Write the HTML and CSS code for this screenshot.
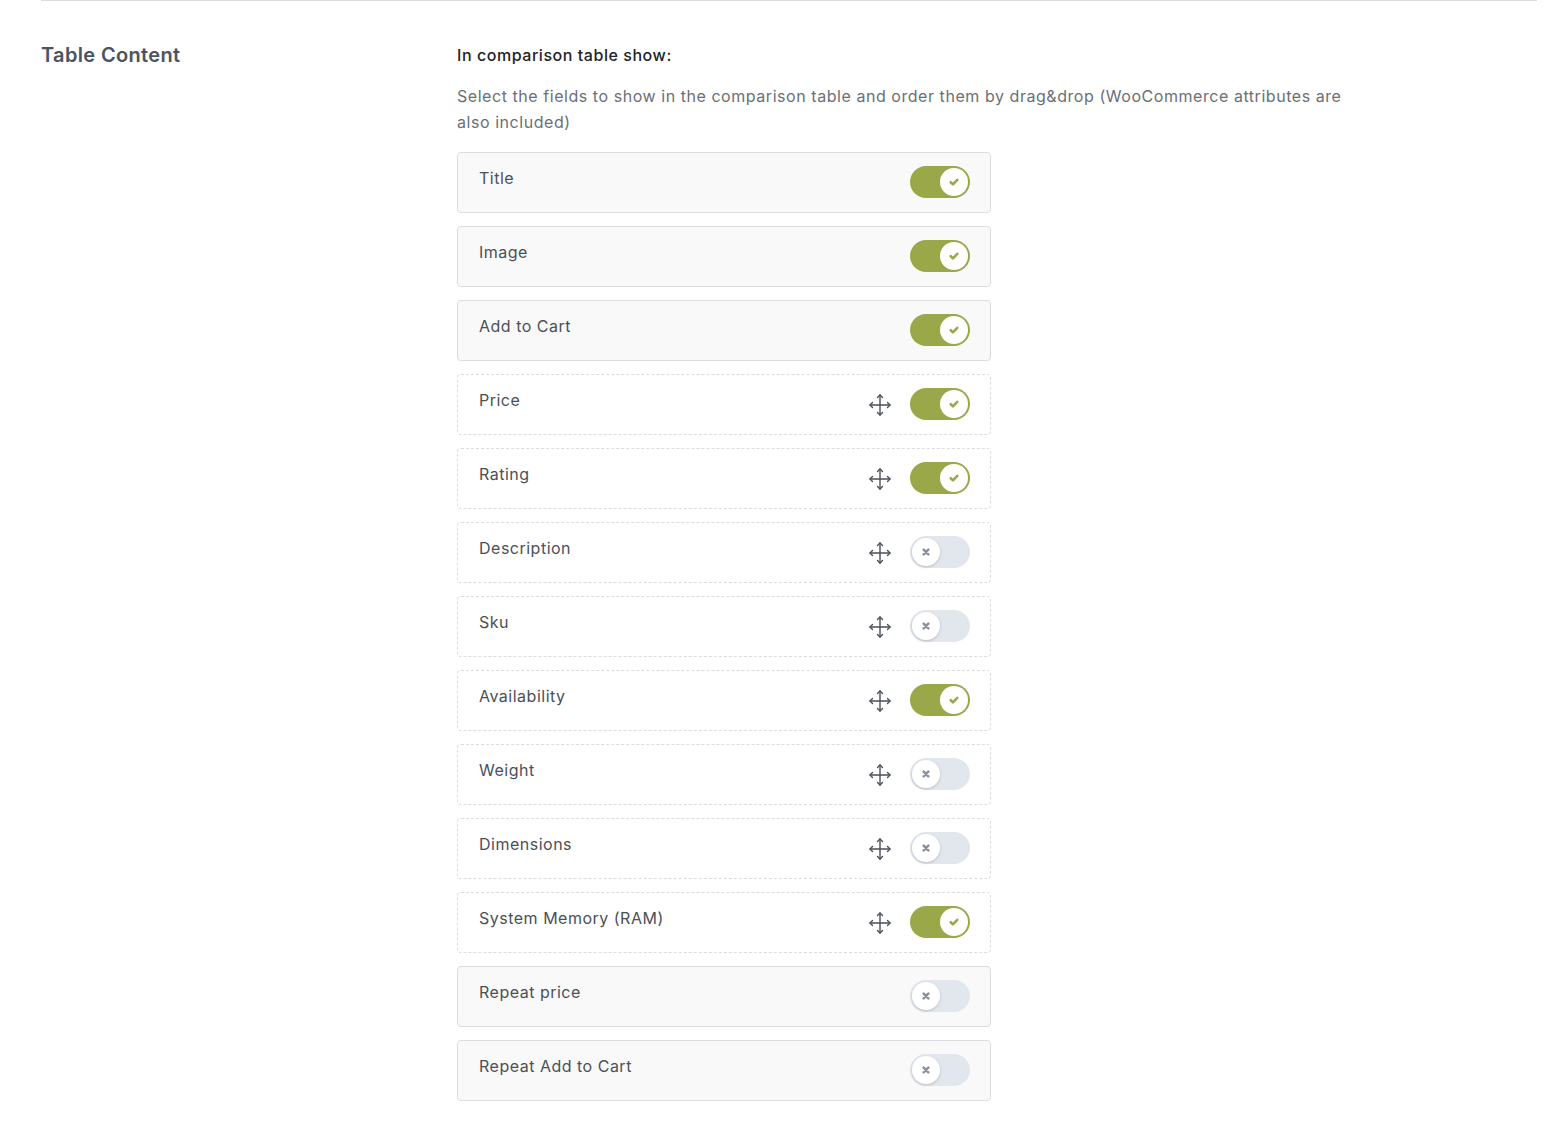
FILE: index.html
```html
<!DOCTYPE html>
<html lang="en">
<head>
    <meta charset="UTF-8">
    <title>Table Content</title>
    <link rel="stylesheet" href="styles.css">
</head>
<body>
    <div class="settings">
        <div class="setting-row">
            <h2 class="setting-title">Table Content</h2>
            <div class="setting-body">
                <div class="field-label">In comparison table show:</div>
                <p class="field-desc">Select the fields to show in the comparison table and order them by drag&amp;drop (WooCommerce attributes are also included)</p>

                <ul class="field-list">
                    <li class="field fixed"><span class="field-name">Title</span><span class="toggle on"></span></li>
                    <li class="field fixed"><span class="field-name">Image</span><span class="toggle on"></span></li>
                    <li class="field fixed"><span class="field-name">Add to Cart</span><span class="toggle on"></span></li>
                    <li class="field sortable"><span class="field-name">Price</span><span class="drag"></span><span class="toggle on"></span></li>
                    <li class="field sortable"><span class="field-name">Rating</span><span class="drag"></span><span class="toggle on"></span></li>
                    <li class="field sortable"><span class="field-name">Description</span><span class="drag"></span><span class="toggle"></span></li>
                    <li class="field sortable"><span class="field-name">Sku</span><span class="drag"></span><span class="toggle"></span></li>
                    <li class="field sortable"><span class="field-name">Availability</span><span class="drag"></span><span class="toggle on"></span></li>
                    <li class="field sortable"><span class="field-name">Weight</span><span class="drag"></span><span class="toggle"></span></li>
                    <li class="field sortable"><span class="field-name">Dimensions</span><span class="drag"></span><span class="toggle"></span></li>
                    <li class="field sortable"><span class="field-name">System Memory (RAM)</span><span class="drag"></span><span class="toggle on"></span></li>
                    <li class="field fixed"><span class="field-name">Repeat price</span><span class="toggle"></span></li>
                    <li class="field fixed"><span class="field-name">Repeat Add to Cart</span><span class="toggle"></span></li>
                </ul>
            </div>
        </div>
    </div>

    <script>
        // drop the same icons into every drag handle and toggle knob
        const dragIcon = '<svg width="24" height="24" viewBox="0 0 24 24" fill="none" stroke="#4b5058" stroke-width="1.4" stroke-linecap="round" stroke-linejoin="round">' +
            '<path d="M12 2v20M2 12h20"/>' +
            '<path d="M9.5 4.5L12 2l2.5 2.5M9.5 19.5L12 22l2.5-2.5M4.5 9.5L2 12l2.5 2.5M19.5 9.5L22 12l-2.5 2.5"/></svg>';
        const checkIcon = '<svg width="14" height="14" viewBox="0 0 12 12" fill="none" stroke="#9aa84a" stroke-width="2.2" stroke-linecap="round" stroke-linejoin="round"><path d="M3.2 6.2l1.9 1.9 3.7-4"/></svg>';
        const crossIcon = '<svg width="14" height="14" viewBox="0 0 12 12" fill="none" stroke="#8a909b" stroke-width="2.2" stroke-linecap="round"><path d="M4 4l4 4M8 4l-4 4"/></svg>';

        document.querySelectorAll('.drag').forEach(el => {
            el.innerHTML = dragIcon;
        });

        document.querySelectorAll('.toggle').forEach(el => {
            const on = el.classList.contains('on');
            el.innerHTML = '<span class="knob">' + (on ? checkIcon : crossIcon) + '</span>';
        });
    </script>
</body>
</html>
```

FILE: styles.css
```css
body {
    margin: 0;
    padding: 0;
    background: #fff;
    font-family: Inter, "Noto Sans", Arial, sans-serif;
    color: #50575e;
}

.settings {
    margin: 0 27px 0 41px;
    border-top: 1px solid #dcdcde;
}

.setting-row {
    display: flex;
    padding-top: 42px;
    padding-bottom: 40px;
}

.setting-title {
    width: 416px;
    flex-shrink: 0;
    margin: 0;
    font-size: 20px;
    line-height: 24px;
    font-weight: 600;
    letter-spacing: 0.35px;
    color: #4a5361;
}

.setting-body {
    flex: 1;
}

.field-label {
    font-size: 16px;
    line-height: 24px;
    font-weight: 500;
    letter-spacing: 0.55px;
    color: #1d2327;
}

.field-desc {
    max-width: 892px;
    margin: 16px 0 17px;
    font-size: 16px;
    line-height: 26px;
    letter-spacing: 0.55px;
    color: #6b6f75;
}

.field-list {
    list-style: none;
    margin: 0;
    padding: 0;
    width: 534px;
    display: flex;
    flex-direction: column;
    gap: 13px;
}

.field {
    display: flex;
    align-items: center;
    height: 61px;
    box-sizing: border-box;
    padding: 0 20px 0 21px;
    border-radius: 4px;
    font-size: 16px;
}

.field.fixed {
    background: #f9f9f9;
    border: 1px solid #dcdcde;
}

.field.sortable {
    background: #fff;
    border: 1px dashed #dcdcde;
}

.field-name {
    flex: 1;
    margin-top: -10px;
    line-height: 24px;
    color: #4b5058;
    letter-spacing: 0.5px;
}

.drag {
    display: flex;
    width: 24px;
    height: 24px;
    margin-right: 18px;
}

.toggle {
    position: relative;
    width: 60px;
    height: 32px;
    margin-top: -1px;
    border-radius: 16px;
    background: #e2e6ed;
    flex-shrink: 0;
}

.toggle.on {
    background: #9aa84a;
}

.knob {
    position: absolute;
    top: 2px;
    left: 2px;
    width: 28px;
    height: 28px;
    border-radius: 50%;
    background: #fff;
    box-shadow: 0 1px 3px rgba(0, 0, 0, 0.18);
    display: flex;
    align-items: center;
    justify-content: center;
}

.toggle.on .knob {
    left: 30px;
    box-shadow: none;
}
```
